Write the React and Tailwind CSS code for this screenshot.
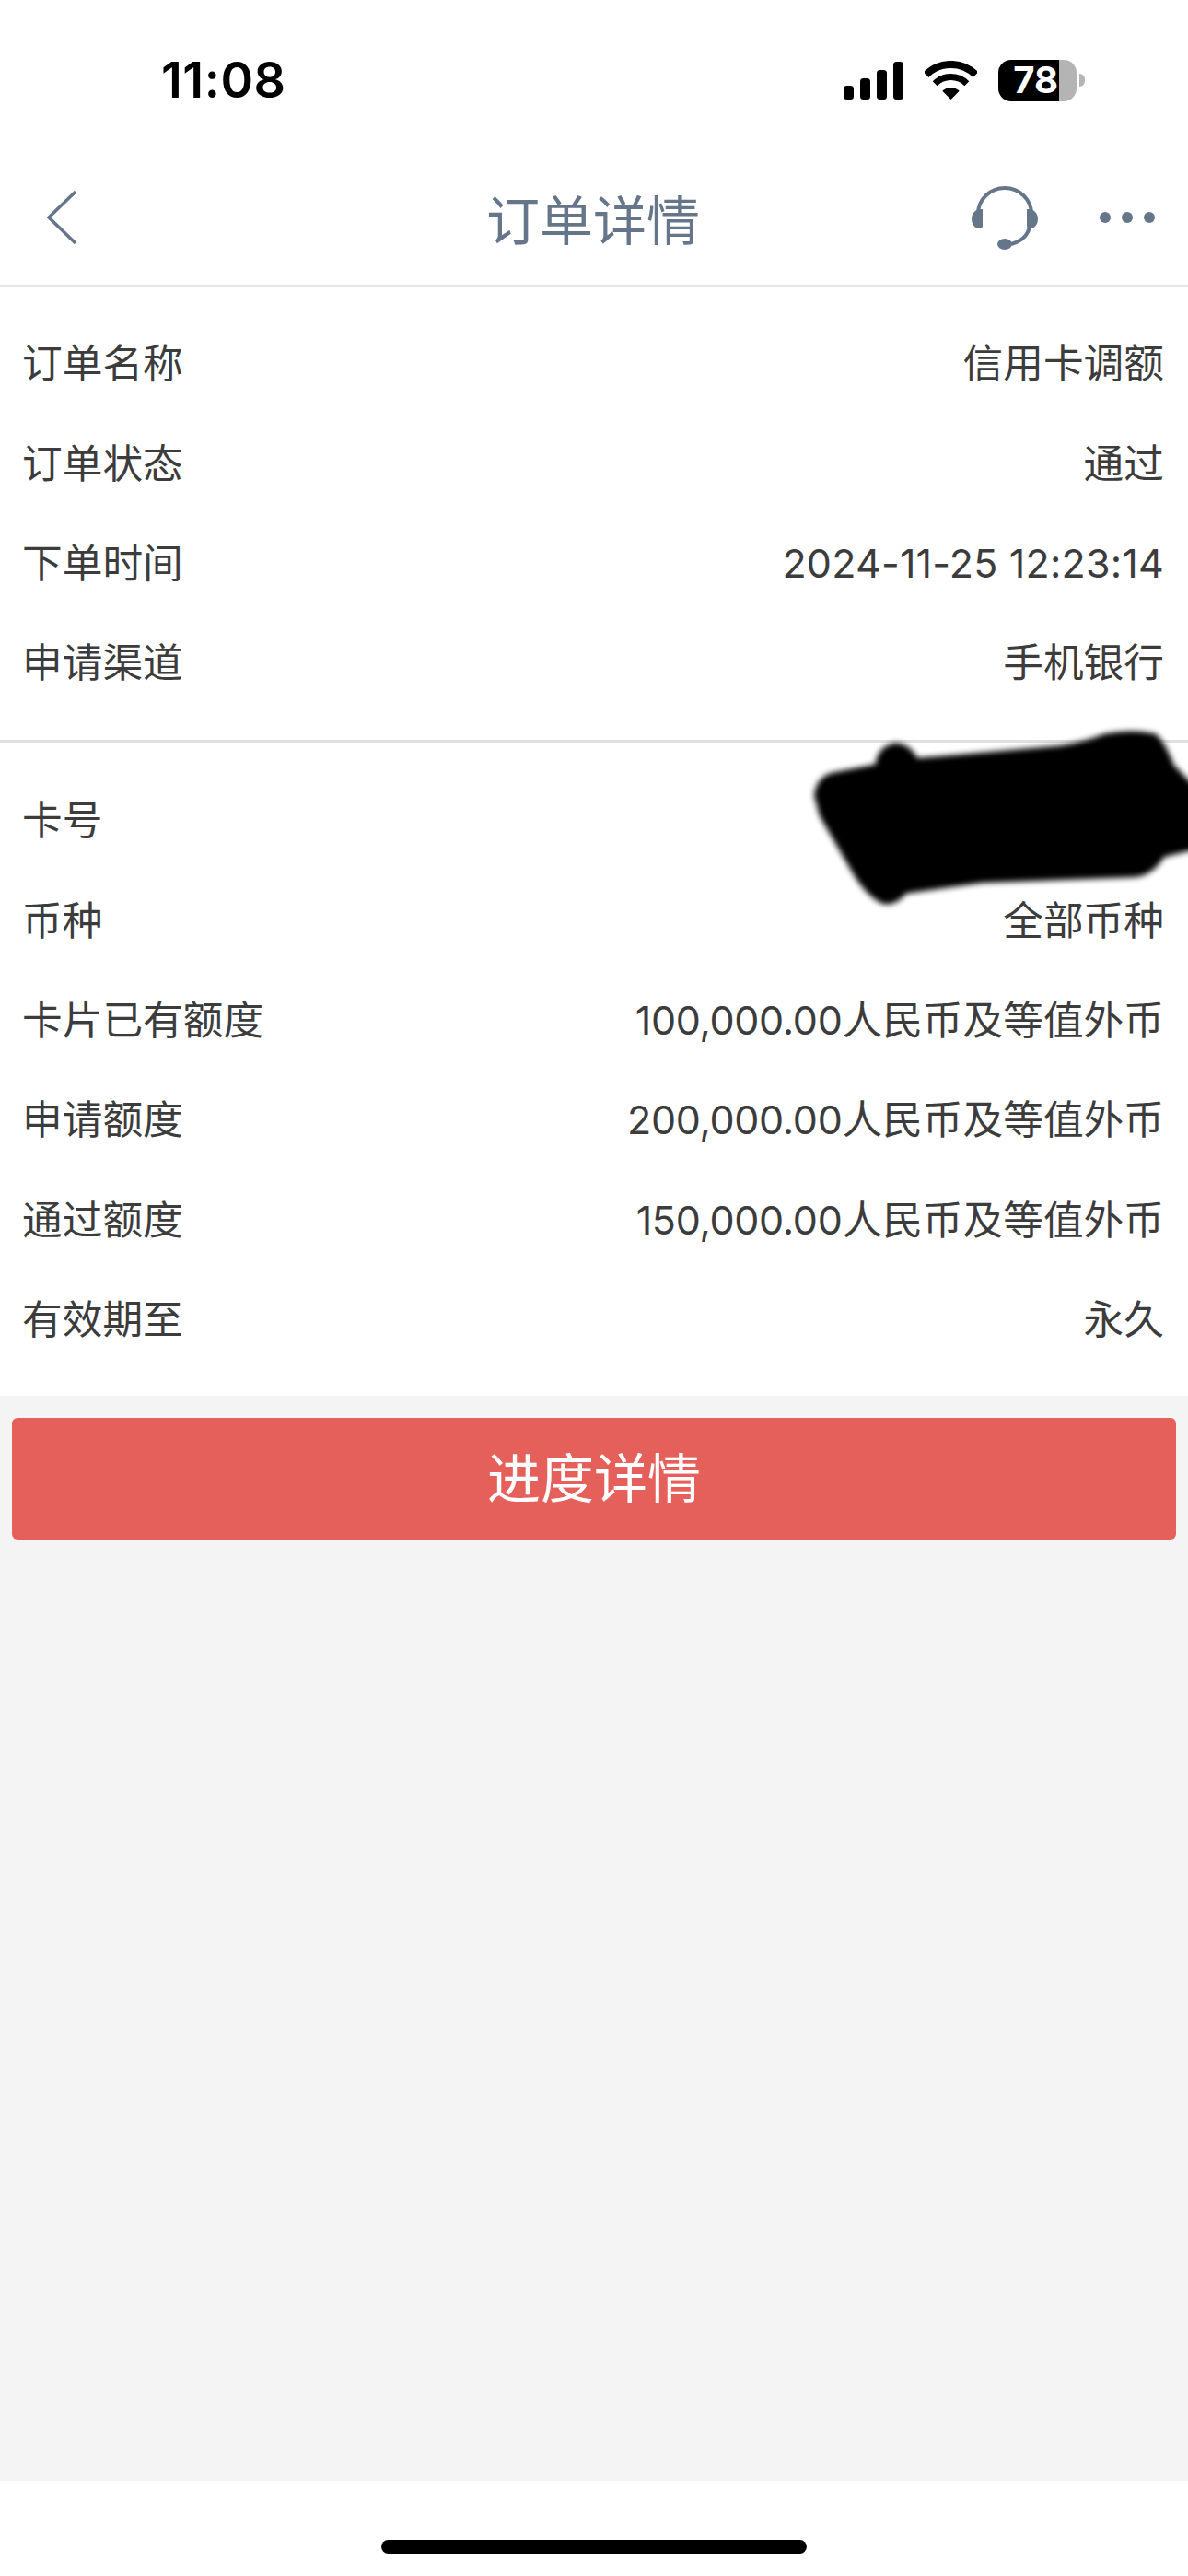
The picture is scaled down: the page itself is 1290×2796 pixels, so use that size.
import React from "react";

const orderRows = [
  ["订单名称", "信用卡调额"],
  ["订单状态", "通过"],
  ["下单时间", "2024-11-25 12:23:14"],
  ["申请渠道", "手机银行"],
];

const cardRows = [
  ["卡号", ""],
  ["币种", "全部币种"],
  ["卡片已有额度", "100,000.00", "人民币及等值外币"],
  ["申请额度", "200,000.00", "人民币及等值外币"],
  ["通过额度", "150,000.00", "人民币及等值外币"],
  ["有效期至", "永久"],
];

const Row = ({ label, value, unit }) => (
  <div className="flex h-[108.3px] items-center justify-between pl-[24px] pr-[26px] text-[43.7px] leading-none text-[#3c3c3c]">
    <span>{label}</span>
    {unit ? (
      <span>
        <span className="text-[43px] tracking-[-0.3px]">{value}</span>
        {unit}
      </span>
    ) : (
      <span className={value.startsWith("2024") ? "text-[43px] tracking-[0.2px]" : ""}>{value}</span>
    )}
  </div>
);

const SignalIcon = () => (
  <svg width="65" height="41" viewBox="0 0 65 41" fill="#000">
    <rect x="0" y="26" width="11" height="15" rx="3.5" />
    <rect x="18" y="18" width="11" height="23" rx="3.5" />
    <rect x="36" y="9" width="11" height="32" rx="3.5" />
    <rect x="54" y="0" width="11" height="41" rx="3.5" />
  </svg>
);

const WifiIcon = () => (
  <svg width="57" height="42" viewBox="0 0 57 42">
    <path d="M1.6 15.1A38 38 0 0 1 55.4 15.1" fill="none" stroke="#000" strokeWidth="8" />
    <path d="M11.2 24.7A24.5 24.5 0 0 1 45.8 24.7" fill="none" stroke="#000" strokeWidth="7" />
    <path d="M28.5 42L19.3 32.8A13 13 0 0 1 37.7 32.8Z" fill="#000" />
  </svg>
);

const Battery = () => (
  <div className="flex items-center">
    <div className="flex h-[45px] w-[66px] items-center justify-end rounded-l-[14px] bg-black pr-[1px] text-[40px] font-bold leading-none text-white">
      78
    </div>
    <div className="h-[45px] w-[19px] rounded-r-[14px] bg-[#b4b4b4]" />
    <div className="ml-[3px] h-[14px] w-[6px] rounded-r-full bg-[#b4b4b4]" />
  </div>
);

const HeadsetIcon = () => (
  <svg width="72" height="69" viewBox="0 0 72 69" fill="#66768a">
    <path d="M7 30A29 28 0 0 1 65 30" fill="none" stroke="#66768a" strokeWidth="4" />
    <path d="M10 25H12V43Q12 46 9 46C3 46 0 41 0 35.5C0 30 4 25 10 25Z" />
    <path d="M62 25H60V43Q60 46 63 46C69 46 72 41 72 35.5C72 30 68 25 62 25Z" />
    <path d="M63 44C61 54 54 60 43 63" fill="none" stroke="#66768a" strokeWidth="4" />
    <ellipse cx="36" cy="63" rx="8" ry="6" />
  </svg>
);

const App = () => {
  return (
    <div className="flex h-[2796px] flex-col overflow-hidden bg-white font-['Inter','Noto_Sans_CJK_SC',sans-serif]">
      {/* status bar */}
      <div className="flex h-[174px] items-center justify-between pl-[175px] pr-[112px]">
        <span className="text-[54px] font-semibold leading-none tracking-[0.5px] text-black">11:08</span>
        <div className="flex items-center gap-[23px]">
          <SignalIcon />
          <WifiIcon />
          <Battery />
        </div>
      </div>

      {/* nav bar */}
      <div className="grid h-[138px] grid-cols-[1fr_auto_1fr] items-center border-b-[3px] border-[#e5e5e5] pl-[50px] pr-[36px]">
        <svg className="mb-[11px]" width="34" height="58" viewBox="0 0 34 58">
          <path d="M32 1L3 29L32 57" fill="none" stroke="#66768a" strokeWidth="3.5" />
        </svg>
        <h1 className="mb-[3px] mr-[16px] text-[58px] font-normal leading-none text-[#66768a]">订单详情</h1>
        <div className="mb-[11px] flex items-center justify-end gap-[67px]">
          <HeadsetIcon />
          <div className="flex gap-[12px]">
            <span className="h-[12px] w-[12px] rounded-full bg-[#66768a]" />
            <span className="h-[12px] w-[12px] rounded-full bg-[#66768a]" />
            <span className="h-[12px] w-[12px] rounded-full bg-[#66768a]" />
          </div>
        </div>
      </div>

      {/* order info */}
      <div className="border-b-[3px] border-[#e0e0e0] py-[29px]">
        {orderRows.map(([label, value]) => (
          <Row key={label} label={label} value={value} />
        ))}
      </div>

      {/* card info */}
      <div className="relative pb-[28px] pt-[31px]">
        {cardRows.map(([label, value, unit]) => (
          <Row key={label} label={label} value={value} unit={unit} />
        ))}
        {/* marker scribble over the card number */}
        <svg
          className="absolute right-0 top-[-16px] overflow-visible blur-[3px]"
          width="410"
          height="197"
          viewBox="240 90 1230 590"
        >
          <path
            d="M252 310Q260 250 310 236L452 208Q460 146 520 138Q568 146 588 188L1050 148Q1130 136 1200 108Q1290 92 1362 108Q1392 128 1424 210L1540 330V474L1392 510Q1352 574 1290 576L800 594L552 629Q520 668 480 664Q428 644 381 568L271 378Z"
            fill="#000"
          />
        </svg>
      </div>

      {/* progress button */}
      <div className="flex-1 bg-[#f4f4f4] px-[13px] pt-[24px]">
        <button className="flex h-[132px] w-full items-center justify-center rounded-[6px] bg-[#e55f5b] text-[58px] leading-none text-white">
          进度详情
        </button>
      </div>

      {/* home indicator */}
      <div className="flex h-[103px] justify-center bg-white pt-[64px]">
        <div className="h-[15px] w-[462px] rounded-full bg-black" />
      </div>
    </div>
  );
};

export default App;
